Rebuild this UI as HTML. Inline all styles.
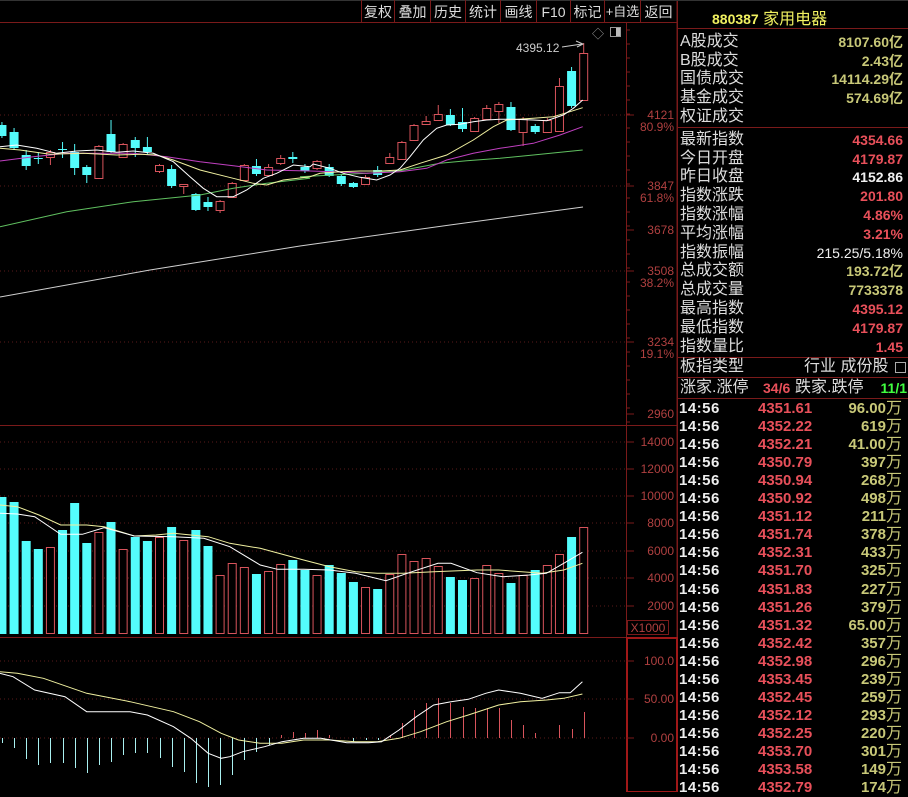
<!DOCTYPE html>
<html><head><meta charset="utf-8"><style>
*{margin:0;padding:0;box-sizing:border-box}
body{width:908px;height:792px;background:#000;overflow:hidden;position:relative;font-family:"Liberation Sans","Noto Sans CJK SC",sans-serif;color:#ddd}
.t{position:absolute;white-space:nowrap}
.tb{position:absolute;top:0;height:22px;font-size:14px;color:#ddd;line-height:24px;text-align:center;border-left:1px solid #7a1a1a;white-space:nowrap;overflow:hidden}
.lab{position:absolute;left:680px;font-size:16px;color:#ddd;line-height:18px}
.val{position:absolute;right:5px;font-size:14px;font-weight:bold;line-height:18px;text-align:right}
.r{color:#e8505a}.y{color:#c8c878}.w{color:#f0f0f0}.g{color:#40ff40}
.ax{position:absolute;right:234px;font-size:12px;color:#b04040;text-align:right;line-height:12px}
</style></head><body>
<svg id="s" width="908" height="792" style="position:absolute;left:0;top:0"></svg>

<div class="tb" style="left:361px;width:33px">复权</div>
<div class="tb" style="left:394px;width:36px">叠加</div>
<div class="tb" style="left:430px;width:35px">历史</div>
<div class="tb" style="left:465px;width:35px">统计</div>
<div class="tb" style="left:500px;width:36px">画线</div>
<div class="tb" style="left:536px;width:34px">F10</div>
<div class="tb" style="left:570px;width:34px">标记</div>
<div class="tb" style="left:604px;width:36px;font-size:13px">+自选</div>
<div class="tb" style="left:640px;width:36px">返回</div>

<div class="t" style="left:712px;top:5px;font-size:16px;color:#f0f060"><b style="font-size:14px">880387</b> 家用电器</div>
<div class="t" style="left:516px;top:41px;font-size:12px;color:#ccc">4395.12</div>
<div class="t" style="left:592px;top:25px;font-size:12px;color:#999">◇</div>
<div class="t" style="left:610px;top:27px;width:11px;height:10px;border:1px solid #999;background:linear-gradient(90deg,#000 55%,#bbb 55%)"></div>

<div class="ax" style="top:109px">4121</div>
<div class="ax" style="top:121px">80.9%</div>
<div class="ax" style="top:180px">3847</div>
<div class="ax" style="top:192px">61.8%</div>
<div class="ax" style="top:224px">3678</div>
<div class="ax" style="top:265px">3508</div>
<div class="ax" style="top:277px">38.2%</div>
<div class="ax" style="top:336px">3234</div>
<div class="ax" style="top:348px">19.1%</div>
<div class="ax" style="top:408px">2960</div>
<div class="ax" style="top:436px">14000</div>
<div class="ax" style="top:463px">12000</div>
<div class="ax" style="top:490px">10000</div>
<div class="ax" style="top:517px">8000</div>
<div class="ax" style="top:545px">6000</div>
<div class="ax" style="top:572px">4000</div>
<div class="ax" style="top:600px">2000</div>
<div class="t" style="left:627px;top:620px;width:42px;height:15px;border:1px solid #7a1a1a;font-size:12px;color:#b04040;text-align:center">X1000</div>
<div class="ax" style="top:655px">100.0</div>
<div class="ax" style="top:693px">50.00</div>
<div class="ax" style="top:732px">0.00</div>

<div class="lab" style="top:33px">A股成交</div><div class="val y" style="top:33px">8107.60亿</div>
<div class="lab" style="top:52px">B股成交</div><div class="val y" style="top:52px">2.43亿</div>
<div class="lab" style="top:70px">国债成交</div><div class="val y" style="top:70px">14114.29亿</div>
<div class="lab" style="top:89px">基金成交</div><div class="val y" style="top:89px">574.69亿</div>
<div class="lab" style="top:108px">权证成交</div>
<div class="lab" style="top:131px">最新指数</div><div class="val r" style="top:131px">4354.66</div>
<div class="lab" style="top:150px">今日开盘</div><div class="val r" style="top:150px">4179.87</div>
<div class="lab" style="top:168px">昨日收盘</div><div class="val w" style="top:168px">4152.86</div>
<div class="lab" style="top:187px">指数涨跌</div><div class="val r" style="top:187px">201.80</div>
<div class="lab" style="top:206px">指数涨幅</div><div class="val r" style="top:206px">4.86%</div>
<div class="lab" style="top:225px">平均涨幅</div><div class="val r" style="top:225px">3.21%</div>
<div class="lab" style="top:244px">指数振幅</div><div class="val w" style="top:244px;font-weight:normal">215.25/5.18%</div>
<div class="lab" style="top:262px">总成交额</div><div class="val y" style="top:262px">193.72亿</div>
<div class="lab" style="top:281px">总成交量</div><div class="val y" style="top:281px">7733378</div>
<div class="lab" style="top:300px">最高指数</div><div class="val r" style="top:300px">4395.12</div>
<div class="lab" style="top:319px">最低指数</div><div class="val r" style="top:319px">4179.87</div>
<div class="lab" style="top:338px">指数量比</div><div class="val r" style="top:338px">1.45</div>
<div class="lab" style="top:358px">板指类型</div><div class="t" style="left:804px;top:358px;font-size:16px;line-height:18px;color:#ddd">行业 成份股</div>
<div class="t" style="left:895px;top:362px;width:11px;height:11px;border:1px solid #aaa"></div>
<div class="lab" style="top:379px">涨家.涨停</div><div class="t r" style="left:763px;top:379px;font-size:14px;font-weight:bold;line-height:18px">34/6</div>
<div class="t" style="left:795px;top:379px;font-size:16px;line-height:18px;color:#ddd">跌家.跌停</div><div class="val g" style="top:379px;right:1px">11/1</div>
<div id="ticks"></div>

<script>
var s=document.getElementById('s'),h='';
function L(x1,y1,x2,y2,c,w,d){h+='<line x1="'+x1+'" y1="'+y1+'" x2="'+x2+'" y2="'+y2+'" stroke="'+c+'" stroke-width="'+(w||1)+'"'+(d?' stroke-dasharray="'+d+'"':'')+'/>';}
function P(pts,c,w){h+='<polyline fill="none" stroke="'+c+'" stroke-width="'+(w||1)+'" points="'+pts.map(function(p){return p[0].toFixed(1)+','+p[1].toFixed(1)}).join(' ')+'"/>';}
var RC='#7a1a1a';
[115,186,271,342].forEach(function(y){L(0,y,626,y,'#5a1a1a',1,'1 3')});
[442,469,496,523,551,578,606].forEach(function(y){L(0,y,626,y,'#5a1a1a',1,'1 3')});
[661,699,738].forEach(function(y){L(0,y,626,y,'#5a1a1a',1,'1 3')});
L(0,22.5,677,22.5,RC);L(0,425.5,677,425.5,RC);L(0,637.5,677,637.5,RC);
L(626.5,22,626.5,792,RC);L(677.5,0,677.5,792,RC);L(677,0,677,792,RC);
L(0,0.5,908,0.5,'#333');
h+='<rect x="627" y="638" width="50" height="154" fill="none" stroke="#a01818" stroke-width="2"/>';
for(var y=30;y<425;y+=14)L(626,y,630,y,RC);
[115,186,230,271,342,414,442,469,496,523,551,578,606,661,699,738].forEach(function(y){L(626,y,634,y,RC)});
L(677,127.5,908,127.5,RC);L(677,357.5,908,357.5,RC);L(677,377.5,908,377.5,RC);L(677,398.5,908,398.5,RC);L(677,28.5,908,28.5,RC);
var C=[[53,100,43,100,1],[71,106,67,108,0],[86,131,78,131,1],[120,132,118,132,1],[126,132,124,134,0],[119,132,117,146,1],[107,130,102,131,0],[104,111,102,123,1],[108,119,105,120,1],[118,131,117,132,1],[122,129,108,132,0],[115,125,109,126,0],[114,120,105,121,1],[121,124,116,125,1],[125,140,124,141,1],[142,159,141,160,1],[157,163,153,164,1],[170,175,166,177,0],[177,184,175,185,1],[183,187,182,188,0],[176,184,174,186,0],[167,176,164,177,0],[161,168,160,170,1],[167,171,164,173,0],[157,159,152,163,0],[158,163,155,165,1],[167,175,164,176,1],[166,174,159,176,0],[165,180,164,181,1],[183,197,182,198,1],[201,210,200,213,1],[202,207,197,211,0],[194,210,193,211,0],[184,186,184,194,1],[169,186,165,188,0],[165,171,164,173,1],[147,152,137,155,0],[140,148,137,157,0],[144,157,143,158,1],[134,152,120,153,0],[146,178,145,179,1],[167,175,165,183,0],[152,168,144,175,0],[149,150,142,158,0],[152,157,150,165,1],[158,159,152,164,0],[155,166,150,170,0],[132,148,128,150,0],[125,136,122,138,0]];
var RED='#d8545c',CY='#54fcfc';
function cx(k){return 583.7-12.12*k;}
C.forEach(function(c,k){var x=cx(k),col=c[4]?RED:CY;
 L(x,c[2],x,c[0],col);L(x,c[1],x,c[3],col);
 var hh=Math.max(1,c[1]-c[0]);
 if(c[4])h+='<rect x="'+(x-4)+'" y="'+c[0]+'.5" width="8" height="'+hh+'" fill="#000" stroke="'+col+'"/>';
 else h+='<rect x="'+(x-4.5)+'" y="'+c[0]+'" width="9" height="'+hh+'" fill="'+col+'"/>';
});
function z4(a){return a.map(function(p){return [p[0]/3,95+p[1]/3]})}
function z5(a){return a.map(function(p){return [300+p[0]/3,40+p[1]/3]})}
P(z4([[0,395],[200,350],[400,320],[600,300],[700,280],[800,265],[930,250]]).concat(z5([[0,410],[200,400],[300,392],[420,370],[500,362],[600,355],[700,345],[848,330]])),'#60c060');
P(z4([[0,198],[100,185],[200,175],[300,175],[400,175],[500,185],[600,200],[700,212],[800,225],[930,228]]).concat(z5([[100,395],[200,400],[300,395],[380,385],[440,360],[520,340],[600,325],[700,310],[780,285],[848,260]])),'#c040c0');
P(z4([[0,160],[60,165],[150,178],[250,175],[350,180],[420,178],[470,180],[520,195],[600,225],[680,245],[760,265],[800,270],[850,255],[930,245]]).concat(z5([[60,400],[120,395],[180,393],[240,393],[300,390],[360,370],[440,345],[520,300],[580,260],[620,240],[700,235],[760,230],[810,215],[848,203]])),'#f0f0a0');
P(z4([[0,155],[50,150],[110,160],[170,175],[230,168],[290,165],[350,172],[400,168],[460,175],[520,200],[570,245],[610,280],[650,305],[700,305],[740,285],[790,250],[830,235],[880,210],[930,215]]).concat(z5([[40,372],[90,385],[130,400],[180,412],[230,420],[270,405],[300,385],[330,350],[370,300],[410,265],[440,255],[480,253],[520,245],[560,240],[600,238],[640,238],[700,240],[740,242],[790,225],[820,205],[848,180]])),'#ffffff');
P([[0,297],[150,270],[300,246],[450,225],[583,207]],'#d0d0d0');
P([[562,47],[582,44]],'#ccc');P([[576,41],[583,44],[577,47]],'#ccc');
var V=[[527,1],[537,0],[554,1],[565,1],[570,0],[575,1],[583,0],[573,1],[565,1],[578,1],[580,0],[577,0],[566,1],[558,1],[561,1],[554,1],[574,1],[589,0],[587,1],[582,0],[573,0],[565,0],[575,1],[570,0],[560,0],[564,1],[571,1],[574,0],[567,1],[563,1],[575,1],[546,0],[530,0],[540,1],[527,0],[537,1],[541,0],[537,0],[549,1],[522,0],[532,1],[543,0],[503,0],[530,0],[547,1],[549,0],[541,0],[502,0],[497,0]];
V.forEach(function(v,k){var x=cx(k);
 if(v[1])h+='<rect x="'+(x-4)+'" y="'+v[0]+'.5" width="8" height="'+(633-v[0])+'" fill="#000" stroke="'+RED+'"/>';
 else h+='<rect x="'+(x-4.5)+'" y="'+v[0]+'" width="9" height="'+(634-v[0])+'" fill="'+CY+'"/>';});
function z3(a){return a.map(function(p){return [p[0]/2.306,410+p[1]/3]})}
P(z3([[0,285],[40,290],[90,315],[140,345],[200,345],[240,350],[310,378],[360,375],[400,370],[480,380],[530,400],[600,415],[700,450],[760,470],[820,485],[870,490],[930,490],[1000,485],[1100,480],[1150,480],[1250,490],[1300,480],[1343,460]]),'#f0f0a0');
P(z3([[0,310],[40,312],[80,320],[140,373],[190,373],[240,353],[310,378],[400,380],[470,385],[530,410],[600,465],[640,478],[700,478],[760,480],[820,490],[890,512],[950,485],[1010,460],[1040,460],[1100,488],[1160,500],[1220,495],[1260,490],[1300,460],[1343,427]]),'#ffffff');
var M=[712,729,725,738,733,725,720,708,708,708,707,703,698,703,710,723,735,740,740,742,738,735,730,733,732,735,745,752,760,775,785,787,783,772,767,758,753,753,755,762,765,773,768,763,763,765,759,748,743];
M.forEach(function(y,k){var x=Math.round(cx(k))+0.5;L(x,738,x,y,y<738?'#d8545c':'#a8f0f0');});
P(z3([[0,785],[40,790],[100,805],[200,850],[300,875],[400,905],[460,935],[510,970],[550,990],[600,1000],[650,1000],[700,990],[760,990],[820,995],[870,995],[920,985],[970,965],[1030,935],[1080,915],[1150,885],[1200,875],[1260,870],[1300,865],[1343,852]]),'#f0f0a0');
P(z3([[0,790],[30,800],[80,840],[150,860],[200,905],[260,905],[300,905],[340,915],[400,950],[440,985],[480,1030],[510,1045],[530,1040],[560,1025],[610,1010],[650,995],[700,985],[740,985],[800,998],[850,998],[880,995],[920,960],[960,920],[1000,885],[1040,875],[1080,868],[1120,850],[1150,840],[1200,850],[1250,865],[1290,848],[1315,848],[1343,815]]),'#ffffff');
s.innerHTML=h;
var T=[['4351.61','96.00'],['4352.22','619'],['4352.21','41.00'],['4350.79','397'],['4350.94','268'],['4350.92','498'],['4351.12','211'],['4351.74','378'],['4352.31','433'],['4351.70','325'],['4351.83','227'],['4351.26','379'],['4351.32','65.00'],['4352.42','357'],['4352.98','296'],['4353.45','239'],['4352.45','259'],['4352.12','293'],['4352.25','220'],['4353.70','301'],['4353.58','149'],['4352.79','174']];
var th='';T.forEach(function(t,i){var y=400+18.05*i;
 th+='<div class="t" style="left:679px;top:'+y+'px;font-size:15px;font-weight:bold;color:#eee;line-height:18px;letter-spacing:0.5px">14:56</div>';
 th+='<div class="t r" style="left:758px;top:'+y+'px;font-size:15px;font-weight:bold;line-height:18px">'+t[0]+'</div>';
 th+='<div class="val y" style="top:'+y+'px;font-size:15px;right:6px">'+t[1]+'<span style="font-weight:normal;font-size:16px">万</span></div>';});
document.getElementById('ticks').innerHTML=th;
</script>
</body></html>
